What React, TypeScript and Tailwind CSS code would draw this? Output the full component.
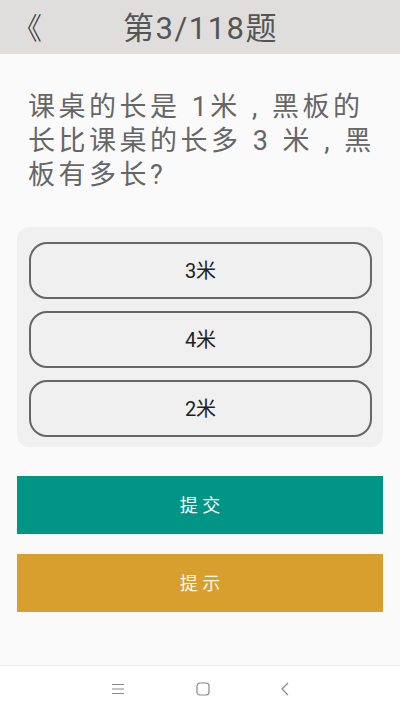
import { useState } from "react";

// 答题页 — 单选题 + 提交 / 提示

const options = ["3米", "4米", "2米"];

export default function App() {
  const [picked, setPicked] = useState<number | null>(null);

  return (
    <div
      className="h-screen flex flex-col bg-[#fafafa]"
      style={{ fontFamily: 'Roboto, "Noto Sans CJK SC", sans-serif' }}
    >
      {/* Header */}
      <div className="h-[54px] shrink-0 bg-[#dfdedc] relative flex items-center justify-center">
        <button
          className="absolute left-[12px] top-[6px] text-[30px] leading-[40px] font-light text-[#333]"
          style={{ fontFamily: '"Noto Sans CJK SC", sans-serif' }}
        >
          《
        </button>
        <h1 className="pt-[3px] pl-[1px] text-[31px] leading-[36px] tracking-[1.5px] text-[#555]">第3/118题</h1>
      </div>

      {/* Question */}
      <p className="mt-[36px] pl-[28px] pr-[16px] text-[27px] leading-[34px] tracking-[3.5px] [word-spacing:1px] text-[#666]">
        课桌的长是 1米 , 黑板的长比课桌的长多 3 米 , 黑板有多长?
      </p>

      {/* Options */}
      <div className="mt-[35px] mx-[17px] bg-[#f0f0f0] rounded-[12px] pl-[12px] pr-[11px] pt-[15px] pb-[10px] flex flex-col gap-[12px]">
        {options.map((o, i) => (
          <button
            key={o}
            onClick={() => setPicked(i)}
            className={
              "h-[57px] rounded-[18px] border-2 border-[#666] text-[20px] text-[#222] flex items-center justify-center " +
              (picked === i ? "bg-[#e3e3e3]" : "bg-[#f0f0f0]")
            }
          >
            {o}
          </button>
        ))}
      </div>

      {/* Actions */}
      <div className="mt-[29px] mx-[17px] flex flex-col gap-[20px]">
        <button className="h-[58px] bg-[#009585] text-white text-[18px]">提 交</button>
        <button className="h-[58px] bg-[#d89f2e] text-[#fff8e6] text-[18px]">提 示</button>
      </div>

      {/* Nav bar */}
      <div className="mt-auto h-[46px] shrink-0 bg-white border-t border-[#ededed] flex items-center justify-center gap-[70px]">
        <svg width="14" height="12" viewBox="0 0 14 12" className="text-[#888]">
          <path d="M1 1.5h12M1 6h12M1 10.5h12" stroke="currentColor" strokeWidth="1" fill="none" />
        </svg>
        <svg width="14" height="14" viewBox="0 0 14 14" className="text-[#888] ml-[1px]">
          <rect x="1" y="1" width="12" height="12" rx="3" stroke="currentColor" strokeWidth="1.2" fill="none" />
        </svg>
        <svg width="10" height="14" viewBox="0 0 10 14" className="text-[#888]">
          <path d="M8 1L2 7l6 6" stroke="currentColor" strokeWidth="1.2" fill="none" />
        </svg>
      </div>
    </div>
  );
}
